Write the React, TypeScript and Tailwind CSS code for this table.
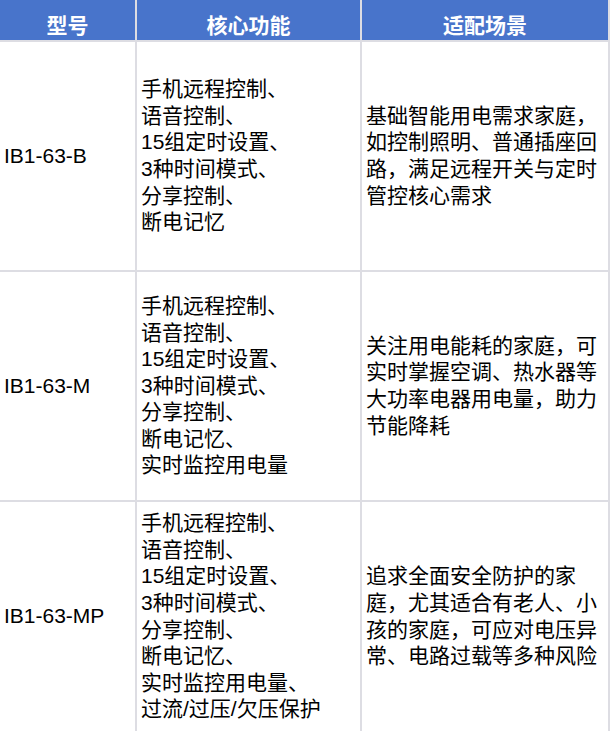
const rows = [
  {
    model: 'IB1-63-B',
    features: ['手机远程控制、', '语音控制、', '15组定时设置、', '3种时间模式、', '分享控制、', '断电记忆'],
    scene: '基础智能用电需求家庭，如控制照明、普通插座回路，满足远程开关与定时管控核心需求',
  },
  {
    model: 'IB1-63-M',
    features: ['手机远程控制、', '语音控制、', '15组定时设置、', '3种时间模式、', '分享控制、', '断电记忆、', '实时监控用电量'],
    scene: '关注用电能耗的家庭，可实时掌握空调、热水器等大功率电器用电量，助力节能降耗',
  },
  {
    model: 'IB1-63-MP',
    features: [
      '手机远程控制、',
      '语音控制、',
      '15组定时设置、',
      '3种时间模式、',
      '分享控制、',
      '断电记忆、',
      '实时监控用电量、',
      '过流/过压/欠压保护',
    ],
    scene: '追求全面安全防护的家庭，尤其适合有老人、小孩的家庭，可应对电压异常、电路过载等多种风险',
  },
]

export default function App() {
  return (
    <div className="min-h-screen bg-white">
      <div
        className="grid w-[610px] grid-cols-[135px_223px_246px] gap-[2px] bg-[#dddde3] pr-[2px] text-[21px] leading-[26.6px] text-black"
        style={{ fontFamily: '"Liberation Sans", "Noto Sans CJK SC", sans-serif' }}
      >
        {/* Header */}
        {['型号', '核心功能', '适配场景'].map((h) => (
          <div key={h} className="h-[40px] bg-[#4874cb] pt-[13px] text-center font-bold text-white">
            {h}
          </div>
        ))}

        {/* Body */}
        {rows.map((r, i) => (
          <div key={r.model} className="contents">
            <div className={`flex items-center bg-white px-[4px] ${i === 2 ? 'h-[229px]' : 'h-[228px]'}`}>
              {r.model}
            </div>
            <div className="flex items-center bg-white px-[4px]">
              <div>
                {r.features.map((f) => (
                  <div key={f}>{f}</div>
                ))}
              </div>
            </div>
            <div className="flex items-center bg-white px-[4px]">
              <div>{r.scene}</div>
            </div>
          </div>
        ))}
      </div>
    </div>
  )
}
